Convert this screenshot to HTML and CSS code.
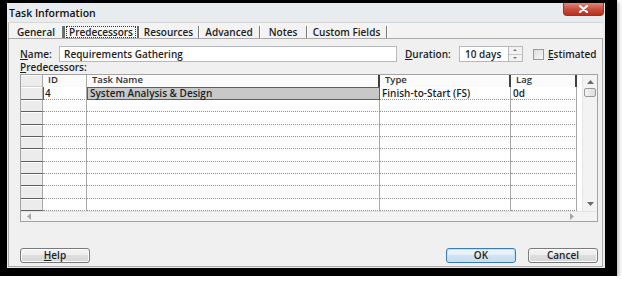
FILE: index.html
```html
<!DOCTYPE html>
<html lang="en">
<head>
    <meta charset="UTF-8">
    <title>Task Information</title>
    <link rel="stylesheet" href="styles.css">
</head>
<body>
<div class="shot">
    <div class="dialog">
        <div class="titlebar">
            <span class="title">Task Information</span>
            <span class="close">
                <svg width="11" height="8" viewBox="0 0 11 8"><path d="M2 1 L9 7 M9 1 L2 7" stroke="#fff" stroke-width="2.2" stroke-linecap="round"/></svg>
            </span>
        </div>

        <div class="tabs">
            <span class="tab t1">General</span>
            <span class="tab t2 active"><span class="focus">Predecessors</span></span>
            <span class="tab t3">Resources</span>
            <span class="tab t4">Advanced</span>
            <span class="tab t5">Notes</span>
            <span class="tab t6">Custom Fields</span>
        </div>

        <div class="page">
            <div class="name-row">
                <label class="lbl name-lbl"><u>N</u>ame:</label>
                <div class="input name-input">Requirements Gathering</div>
                <label class="lbl dur-lbl"><u>D</u>uration:</label>
                <div class="input dur-input">10 days</div>
                <div class="spin">
                    <span class="spin-up"></span>
                    <span class="spin-down"></span>
                </div>
                <span class="check"></span>
                <label class="lbl est-lbl"><u>E</u>stimated</label>
            </div>

            <div class="lbl pred-lbl"><u>P</u>redecessors:</div>

            <div class="grid">
                <div class="grid-main">
                    <div class="sheet">
                        <div class="row head">
                            <div class="rh"></div>
                            <div class="c c-id">ID</div>
                            <div class="c c-name">Task Name</div>
                            <div class="c c-type">Type</div>
                            <div class="c c-lag">Lag</div>
                        </div>
                        <div class="row sel">
                            <div class="rh"></div>
                            <div class="c c-id">4</div>
                            <div class="c c-name">System Analysis &amp; Design</div>
                            <div class="c c-type">Finish-to-Start (FS)</div>
                            <div class="c c-lag">0d</div>
                        </div>
                        <div class="row"><div class="rh"></div><div class="c c-id"></div><div class="c c-name"></div><div class="c c-type"></div><div class="c c-lag"></div></div>
                        <div class="row"><div class="rh"></div><div class="c c-id"></div><div class="c c-name"></div><div class="c c-type"></div><div class="c c-lag"></div></div>
                        <div class="row"><div class="rh"></div><div class="c c-id"></div><div class="c c-name"></div><div class="c c-type"></div><div class="c c-lag"></div></div>
                        <div class="row"><div class="rh"></div><div class="c c-id"></div><div class="c c-name"></div><div class="c c-type"></div><div class="c c-lag"></div></div>
                        <div class="row"><div class="rh"></div><div class="c c-id"></div><div class="c c-name"></div><div class="c c-type"></div><div class="c c-lag"></div></div>
                        <div class="row"><div class="rh"></div><div class="c c-id"></div><div class="c c-name"></div><div class="c c-type"></div><div class="c c-lag"></div></div>
                        <div class="row"><div class="rh"></div><div class="c c-id"></div><div class="c c-name"></div><div class="c c-type"></div><div class="c c-lag"></div></div>
                        <div class="row"><div class="rh"></div><div class="c c-id"></div><div class="c c-name"></div><div class="c c-type"></div><div class="c c-lag"></div></div>
                        <div class="row"><div class="rh"></div><div class="c c-id"></div><div class="c c-name"></div><div class="c c-type"></div><div class="c c-lag"></div></div>
                    </div>
                    <div class="vscroll">
                        <svg width="7" height="4" viewBox="0 0 7 4"><path d="M0 4 L3.5 0 L7 4 Z" fill="#6a6a6a"/></svg>
                        <span class="thumb"></span>
                        <svg class="down" width="7" height="4" viewBox="0 0 7 4"><path d="M0 0 L3.5 4 L7 0 Z" fill="#6a6a6a"/></svg>
                    </div>
                </div>
                <div class="hscroll">
                    <svg width="4" height="7" viewBox="0 0 4 7"><path d="M4 0 L0 3.5 L4 7 Z" fill="#a8a8a8"/></svg>
                    <svg width="4" height="7" viewBox="0 0 4 7"><path d="M0 0 L4 3.5 L0 7 Z" fill="#a8a8a8"/></svg>
                </div>
            </div>

            <div class="buttons">
                <button class="btn"><u>H</u>elp</button>
                <span class="fill"></span>
                <button class="btn ok">OK</button>
                <button class="btn">Cancel</button>
            </div>
        </div>
    </div>
</div>
</body>
</html>
```

FILE: styles.css
```css
body {
    margin: 0;
    padding: 0;
    background: #fff;
    font-family: "Open Sans", "Noto Sans", sans-serif;
    font-size: 10px;
    font-weight: 600;
    color: #1e1e1e;
}

.shot {
    width: 598px;
    height: 265px;
    padding: 3px 12px 8px 7px;
    background: #000;
    box-shadow: 2px 2px 4px rgba(0, 0, 0, 0.25);
}

.dialog {
    height: 265px;
    box-sizing: border-box;
    padding: 0 2px 1px 1px;
    background: #e9ecef;
    display: flex;
    flex-direction: column;
}

/* title bar */
.titlebar {
    height: 19px;
    display: flex;
    align-items: flex-start;
    padding-left: 1px;
}

.title {
    font-size: 10.5px;
    font-weight: 600;
    color: #111;
    line-height: 20px;
}

.close {
    margin-left: auto;
    margin-right: -1px;
    width: 41px;
    height: 13px;
    box-sizing: border-box;
    border: 1px solid #8a3b30;
    border-top: 0;
    border-radius: 0 0 4px 4px;
    background: linear-gradient(#e0897c, #c9503f 50%, #b9301f);
    display: flex;
    align-items: center;
    justify-content: center;
}

/* tabs */
.tabs {
    height: 16px;
    box-sizing: border-box;
    padding: 3px 0 0 1px;
    background: #f3f3f3;
    border-top: 1px solid #d6d6d6;
    border-left: 1px solid #b9b9b9;
    display: flex;
    align-items: flex-start;
}

.tab {
    height: 12px;
    line-height: 13px;
    text-align: center;
    box-sizing: border-box;
    border-right: 1px solid #7a7a7a;
    box-shadow: 1px 0 0 #fff;
    color: #202020;
}

.t1 { width: 53px; }
.t2 { width: 76px; }
.t3 { width: 60px; }
.t4 { width: 61px; }
.t5 { width: 47px; }
.t6 { width: 80px; }

.tab.active {
    border-left: 2px solid #6a6a6a;
    border-right: 2px solid #6a6a6a;
    background: #f8f8f8;
    padding: 0 1px;
}

.focus {
    display: block;
    height: 12px;
    line-height: 11px;
    border: 1px dotted #333;
    box-sizing: border-box;
    white-space: nowrap;
}

/* page */
.page {
    flex: 1;
    background: #f0f0f0;
    border: 1px solid #a9a9a9;
    padding: 7px 4px 3px 11px;
    display: flex;
    flex-direction: column;
}

.lbl u {
    text-decoration: underline;
    text-underline-offset: 1px;
}

.name-row {
    height: 16px;
    display: flex;
    align-items: center;
}

.name-lbl {
    width: 39px;
}

.input {
    height: 16px;
    box-sizing: border-box;
    border: 1px solid #b5b8bd;
    background: #fff;
    line-height: 14px;
    padding-left: 4px;
}

.name-input {
    width: 338px;
}

.dur-lbl {
    margin-left: 8px;
    width: 54px;
}

.dur-input {
    width: 50px;
    padding-left: 5px;
}

.spin {
    width: 14px;
    height: 16px;
    box-sizing: border-box;
    border: 1px solid #b9b9b9;
    border-left: 0;
    background: #f2f2f2;
    display: flex;
    flex-direction: column;
}

.spin span {
    flex: 1;
    position: relative;
}

.spin-up {
    border-bottom: 1px solid #c9c9c9;
}

.spin-up::after,
.spin-down::after {
    content: "";
    position: absolute;
    left: 4px;
    top: 2px;
    border-left: 2px solid transparent;
    border-right: 2px solid transparent;
}

.spin-up::after {
    border-bottom: 2px solid #777;
}

.spin-down::after {
    border-top: 2px solid #777;
}

.check {
    width: 11px;
    height: 11px;
    box-sizing: border-box;
    margin-left: 10px;
    border: 1px solid #9a9a9a;
    background: linear-gradient(135deg, #dcdcdc, #f8f8f8);
}

.est-lbl {
    margin-left: 4px;
}

.pred-lbl {
    height: 12px;
    line-height: 10px;
}

/* grid */
.grid {
    height: 148px;
    box-sizing: border-box;
    border: 1px solid #a3a3a3;
    background: #fff;
    display: flex;
    flex-direction: column;
}

.grid-main {
    height: 136px;
    display: flex;
}

.sheet {
    width: 561px;
    display: flex;
    flex-direction: column;
}

.row {
    flex: 1;
    display: grid;
    grid-template-columns: 22px 44px 293px 131px 66px;
}

.row.head {
    flex: 0 0 12px;
}

.rh {
    background: #ececec;
    border-bottom: 1px solid #5e5e5e;
    border-right: 1px solid #a8a8a8;
    box-shadow: inset 0 1px 0 #fff;
}

.head .rh {
    border-bottom: 1px solid #cfcfcf;
}

.c {
    border-right: 1px solid #a8a8a8;
    border-bottom: 1px dotted #8f8f8f;
    padding: 1px 0 0 2px;
    line-height: 11px;
    white-space: nowrap;
}

.head .c {
    border-bottom: 0;
    padding: 0 0 0 5px;
    font-size: 9.5px;
    line-height: 10px;
    background: #fbfbfb;
    color: #303030;
}

.head .c-name,
.head .c-type,
.head .c-lag {
    border-right: 2px solid #3f3f3f;
}

.sel .c-id {
    border-left: 1px solid #2e7d32;
    padding-left: 1px;
}

.sel .c-name {
    background: #c8c8c8;
    border: 1px solid #2e7d32;
    padding-top: 0;
    line-height: 11px;
}

.vscroll {
    width: 15px;
    background: #f3f3f3;
    border-left: 1px solid #e6e6e6;
    display: flex;
    flex-direction: column;
    align-items: center;
    padding-top: 5px;
    box-sizing: border-box;
}

.thumb {
    width: 12px;
    height: 9px;
    margin-top: 4px;
    box-sizing: border-box;
    border: 1px solid #9a9a9a;
    border-radius: 2px;
    background: linear-gradient(90deg, #f4f4f4, #dcdcdc);
}

.vscroll .down {
    margin-top: auto;
    margin-bottom: 5px;
}

.hscroll {
    flex: 1;
    background: #f3f3f3;
    display: flex;
    align-items: center;
    justify-content: space-between;
    padding: 0 23px 0 6px;
    border-top: 1px solid #e2e2e2;
}

/* buttons */
.buttons {
    margin-top: auto;
    display: flex;
    align-items: center;
}

.fill {
    flex: 1;
}

.btn {
    width: 70px;
    height: 15px;
    margin: 0 0 0 12px;
    padding: 0;
    font-family: inherit;
    font-size: 10px;
    font-weight: 600;
    color: #1e1e1e;
    line-height: 13px;
    border: 1px solid #7a7a7a;
    border-radius: 3px;
    background: linear-gradient(#f4f4f4, #ececec 50%, #dedede 50%, #d6d6d6);
    box-shadow: inset 0 0 0 1px #fbfbfb;
}

.btn:first-child {
    margin-left: 0;
}

.btn.ok {
    border-color: #3a7cb3;
    background: linear-gradient(#eef5fa, #e3eef7 50%, #d2e3f1 50%, #c7dced);
    box-shadow: inset 0 0 0 1px #bfe3f6;
}
```
